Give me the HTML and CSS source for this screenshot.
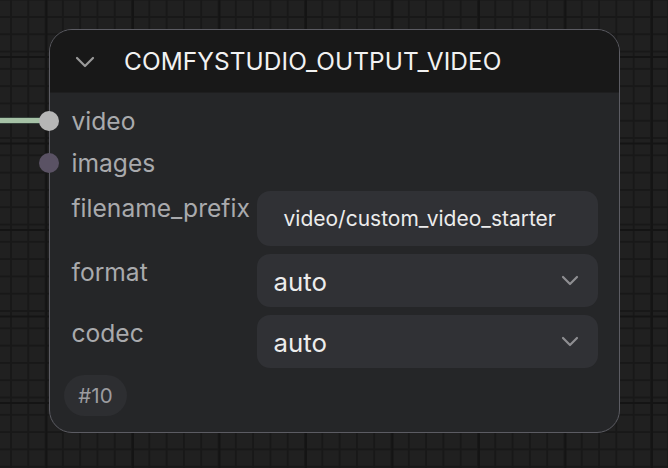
FILE: index.html
```html
<!DOCTYPE html>
<html lang="en">
<head>
	<meta charset="UTF-8">
	<title>Node</title>
<link rel="stylesheet" href="styles.css">
</head>
<body>
	<div class="canvas">
		<div class="wire"></div>
		<div class="node">
			<div class="node-header">
				<svg class="collapse" width="20" height="12" viewBox="0 0 20 12"><path d="M2 2 L10 10 L18 2" fill="none" stroke="#9a9a9a" stroke-width="2.2" stroke-linecap="round" stroke-linejoin="round"/></svg>
				<span class="node-title">COMFYSTUDIO_OUTPUT_VIDEO</span>
			</div>
			<div class="node-body">
				<div class="slot">
					<span class="dot dot-video"></span>
					<span class="slot-label">video</span>
				</div>
				<div class="slot">
					<span class="dot dot-images"></span>
					<span class="slot-label">images</span>
				</div>
				<div class="widgets">
					<div class="widget">
						<span class="widget-label">filename_prefix</span>
						<div class="field field-text">video/custom_video_starter</div>
					</div>
					<div class="widget">
						<span class="widget-label">format</span>
						<div class="field field-combo">
							<span>auto</span>
							<svg width="18" height="11" viewBox="0 0 18 11"><path d="M2 2 L9 9 L16 2" fill="none" stroke="#8e8e92" stroke-width="2.2" stroke-linecap="round" stroke-linejoin="round"/></svg>
						</div>
					</div>
					<div class="widget">
						<span class="widget-label">codec</span>
						<div class="field field-combo">
							<span>auto</span>
							<svg width="18" height="11" viewBox="0 0 18 11"><path d="M2 2 L9 9 L16 2" fill="none" stroke="#8e8e92" stroke-width="2.2" stroke-linecap="round" stroke-linejoin="round"/></svg>
						</div>
					</div>
				</div>
				<div class="badge">#10</div>
			</div>
		</div>
	</div>
</body>
</html>
```
FILE: styles.css
```css
*{margin: 0; padding: 0; box-sizing: border-box;}
body{
	width: 668px;
	height: 468px;
	overflow: hidden;
	font-family: Inter, "Noto Sans", sans-serif;
	background-color: #202020;
	background-image:
		linear-gradient(90deg, #141414 2px, transparent 2px),
		linear-gradient(#141414 2px, transparent 2px),
		linear-gradient(90deg, #181818 2px, transparent 2px),
		linear-gradient(#181818 2px, transparent 2px);
	background-size: 86.5px 86.5px, 86.5px 86.5px, 17.3px 17.3px, 17.3px 17.3px;
	background-position: 45.5px 56px, 45.5px 56px, 10px 16px, 10px 16px;
}
.canvas{position: relative; width: 668px; height: 468px;}

.wire{
	position: absolute;
	left: 0;
	top: 117px;
	width: 44px;
	height: 7px;
	background: #a6c2a6;
	border-top: 1px solid #34403a;
	border-bottom: 1.5px solid #34403a;
}

.node{
	position: absolute;
	left: 49px;
	top: 29px;
	width: 571px;
	height: 404px;
	border: 1.5px solid #5c5c63;
	border-radius: 23px;
	background: #252628;
	display: flex;
	flex-direction: column;
}
.node-header{
	height: 62.5px;
	flex-shrink: 0;
	background: #181818;
	border-radius: 22px 22px 0 0;
	display: flex;
	align-items: center;
	padding-left: 25px;
	border-bottom: 1px solid #1e1e1f;
}
.collapse{margin-top: 2px;}
.node-title{
	margin-left: 29px;
	color: #f2f2f2;
	font-size: 24.4px;
	letter-spacing: 0.1px;
}

.node-body{
	padding: 7px 21px 0 0;
	display: flex;
	flex-direction: column;
	flex: 1;
}
.slot{
	position: relative;
	height: 42px;
	display: flex;
	align-items: center;
	padding-left: 21.5px;
}
.dot{
	position: absolute;
	left: -11px;
	top: 11px;
	width: 20px;
	height: 20px;
	border-radius: 50%;
}
.dot-video{background: #b6b6b6;}
.dot-images{background: #5a5264;}
.slot-label{
	color: #a9aaad;
	font-size: 24.6px;
	margin-top: 1px;
}

.widgets{
	margin-top: 7px;
	display: flex;
	flex-direction: column;
	gap: 8px;
}
.widget{
	display: flex;
	align-items: flex-start;
}
.widget-label{
	width: 206.5px;
	padding-left: 21.5px;
	color: #a9aaad;
	font-size: 24.6px;
	line-height: 30px;
	margin-top: 2px;
	white-space: nowrap;
}
.widget + .widget .widget-label{margin-top: 3px;}
.field{
	flex: 1;
	height: 54px;
	background: #303135;
	border-radius: 13px;
	color: #ececec;
	display: flex;
	align-items: center;
}
.field-text{
	padding-left: 27px;
	font-size: 21px;
	height: 55px;
}
.field-combo{
	justify-content: space-between;
	padding: 0 19px 0 17px;
	font-size: 25.8px;
	height: 53px;
}
.field-combo span{margin-top: 2px;}

.badge{
	margin: 7px 0 0 14px;
	width: 63px;
	height: 41px;
	border-radius: 21px;
	background: #2d2e31;
	color: #9c9ca0;
	font-size: 20.5px;
	display: flex;
	align-items: center;
	justify-content: center;
}
```
